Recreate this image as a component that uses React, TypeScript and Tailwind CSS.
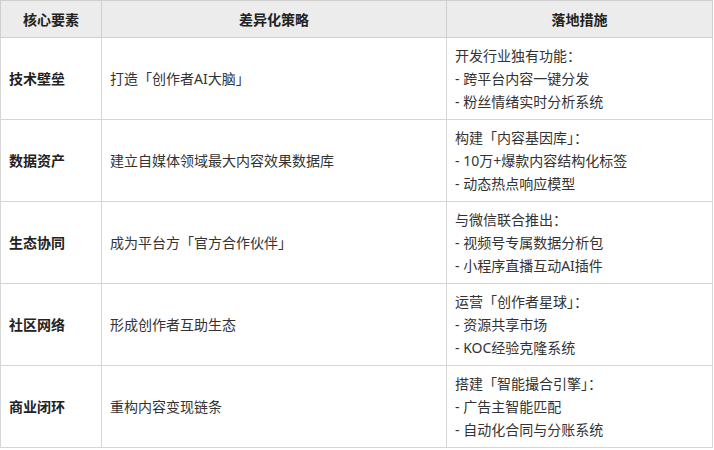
import React from "react";

type Row = {
  key: string;
  strategy: string;
  title: string;
  items: string[];
};

const rows: Row[] = [
  {
    key: "技术壁垒",
    strategy: "打造「创作者AI大脑」",
    title: "开发行业独有功能：",
    items: ["跨平台内容一键分发", "粉丝情绪实时分析系统"],
  },
  {
    key: "数据资产",
    strategy: "建立自媒体领域最大内容效果数据库",
    title: "构建「内容基因库」：",
    items: ["10万+爆款内容结构化标签", "动态热点响应模型"],
  },
  {
    key: "生态协同",
    strategy: "成为平台方「官方合作伙伴」",
    title: "与微信联合推出：",
    items: ["视频号专属数据分析包", "小程序直播互动AI插件"],
  },
  {
    key: "社区网络",
    strategy: "形成创作者互助生态",
    title: "运营「创作者星球」：",
    items: ["资源共享市场", "KOC经验克隆系统"],
  },
  {
    key: "商业闭环",
    strategy: "重构内容变现链条",
    title: "搭建「智能撮合引擎」：",
    items: ["广告主智能匹配", "自动化合同与分账系统"],
  },
];

const App = () => {
  return (
    <div className="bg-white w-[714px] h-[450px] font-['Noto_Sans','Noto_Sans_CJK_SC',sans-serif] text-[14px] text-[#333]">
      <table className="w-[713px] border-collapse table-fixed">
        <colgroup>
          <col className="w-[101px]" />
          <col className="w-[345px]" />
          <col />
        </colgroup>
        <thead>
          <tr className="bg-[#ececec] h-[37px]">
            <th className="border border-[#cfcfcf] font-bold text-[#222] text-center">
              核心要素
            </th>
            <th className="border border-[#cfcfcf] font-bold text-[#222] text-center">
              差异化策略
            </th>
            <th className="border border-[#cfcfcf] font-bold text-[#222] text-center">
              落地措施
            </th>
          </tr>
        </thead>
        <tbody>
          {rows.map((r) => (
            <tr key={r.key} className="h-[82px]">
              <td className="border border-[#d6d6d6] px-2 font-bold text-[#222]">
                {r.key}
              </td>
              <td className="border border-[#d6d6d6] px-2">{r.strategy}</td>
              <td className="border border-[#d6d6d6] px-2 py-[5px] leading-[23px]">
                <div>{r.title}</div>
                {r.items.map((it) => (
                  <div key={it}>- {it}</div>
                ))}
              </td>
            </tr>
          ))}
        </tbody>
      </table>
    </div>
  );
};

export default App;
